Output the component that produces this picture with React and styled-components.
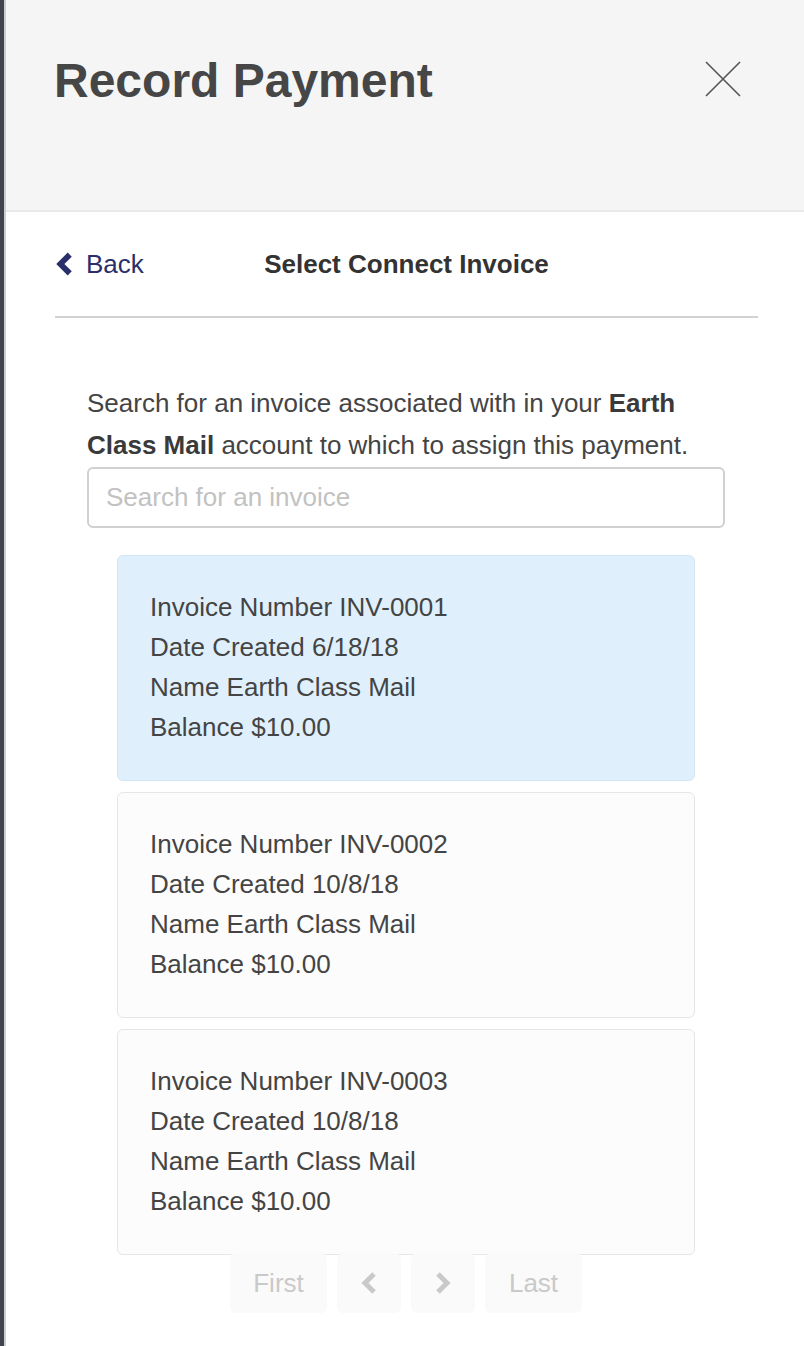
import React, { useState } from "react";
import styled, { createGlobalStyle } from "styled-components";

const GlobalStyle = createGlobalStyle`
    html, body {
        margin: 0;
        padding: 0;
        background: #ffffff;
    }
    body {
        font-family: "Liberation Sans", Arial, sans-serif;
        color: #444444;
    }
`;

const Page = styled.div`
    display: flex;
    min-height: 100vh;
`;

const Backdrop = styled.div`
    width: 4px;
    flex-shrink: 0;
    background: #41434f;
`;

const Panel = styled.div`
    flex: 1;
    display: flex;
    flex-direction: column;
    border-left: 2px solid #cdcdcd;
    background: #ffffff;
`;

const Header = styled.div`
    display: flex;
    justify-content: space-between;
    align-items: flex-start;
    height: 212px;
    box-sizing: border-box;
    padding: 57px 63px 0 48px;
    background: #f5f5f5;
    border-bottom: 2px solid #e9e9e9;
`;

const Title = styled.h1`
    margin: 0;
    font-size: 48px;
    line-height: 48px;
    font-weight: 700;
    color: #464646;
`;

const CloseButton = styled.button`
    border: none;
    background: none;
    padding: 0;
    margin-top: 4px;
    cursor: pointer;
    display: flex;
`;

const Body = styled.div`
    display: flex;
    flex-direction: column;
    padding: 0 46px 0 49px;
`;

const NavRow = styled.div`
    display: grid;
    grid-template-columns: 1fr auto 1fr;
    align-items: center;
    padding: 37px 0;
    border-bottom: 2px solid #d2d2d2;
`;

const BackLink = styled.a`
    display: flex;
    align-items: center;
    gap: 13px;
    color: #2a2f6c;
    font-size: 26px;
    line-height: 30px;
    text-decoration: none;
    cursor: pointer;
    padding-left: 1px;
`;

const StepTitle = styled.div`
    font-size: 26px;
    line-height: 30px;
    font-weight: 700;
    color: #333333;
`;

const Content = styled.div`
    display: flex;
    flex-direction: column;
    padding: 64px 33px 0 32px;
`;

const Intro = styled.p`
    margin: 0;
    font-size: 26px;
    line-height: 42px;
    color: #444444;

    strong {
        color: #3a3a3a;
    }
`;

const SearchInput = styled.input`
    margin-top: 1px;
    height: 61px;
    box-sizing: border-box;
    border: 2px solid #d0d0d0;
    border-radius: 6px;
    padding: 0 17px;
    font-family: inherit;
    font-size: 26px;
    color: #444444;
    outline: none;

    &::placeholder {
        color: #c2c2c2;
    }
`;

const InvoiceList = styled.div`
    display: flex;
    flex-direction: column;
    gap: 11px;
    margin: 27px 30px 0;
`;

const InvoiceCard = styled.div`
    padding: 31px 32px 33px;
    border: 1px solid ${(props) => (props.selected ? "#d4e6f3" : "#e6e6e6")};
    border-radius: 6px;
    background: ${(props) => (props.selected ? "#dff0fc" : "#fcfcfc")};
    cursor: pointer;
`;

const InvoiceLine = styled.div`
    font-size: 26px;
    line-height: 40px;
    color: #444444;
`;

const Pagination = styled.div`
    display: flex;
    justify-content: center;
    gap: 10px;
    margin-top: -2px;
`;

const PageButton = styled.button`
    display: flex;
    align-items: center;
    justify-content: center;
    height: 60px;
    min-width: ${(props) => (props.icon ? "64px" : "97px")};
    padding: 0 ${(props) => (props.icon ? "0" : "22px")};
    border: none;
    border-radius: 6px;
    background: #fafafa;
    color: #c9c9c9;
    font-family: inherit;
    font-size: 26px;
`;

const Chevron = ({ dir = "left", color, w = 17, h = 24, sw = 5.5 }) => (
    <svg width={w} height={h} viewBox="0 0 16 23">
        <path
            d={dir === "left" ? "M13 2.5 L4 11.5 L13 20.5" : "M3 2.5 L12 11.5 L3 20.5"}
            fill="none"
            stroke={color}
            strokeWidth={sw}
            strokeLinecap="butt"
            strokeLinejoin="miter"
        />
    </svg>
);

const invoices = [
    { id: "INV-0001", date: "6/18/18", name: "Earth Class Mail", balance: "$10.00" },
    { id: "INV-0002", date: "10/8/18", name: "Earth Class Mail", balance: "$10.00" },
    { id: "INV-0003", date: "10/8/18", name: "Earth Class Mail", balance: "$10.00" },
];

const App = () => {
    const [selected, setSelected] = useState("INV-0001");
    const [query, setQuery] = useState("");

    return (
        <Page>
            <GlobalStyle />
            <Backdrop />
            <Panel>
                <Header>
                    <Title>Record Payment</Title>
                    <CloseButton aria-label="Close">
                        <svg width="36" height="36" viewBox="0 0 36 36">
                            <path d="M1 1 L35 35 M35 1 L1 35" stroke="#555555" strokeWidth="1.6" fill="none" />
                        </svg>
                    </CloseButton>
                </Header>
                <Body>
                    <NavRow>
                        <BackLink>
                            <Chevron dir="left" color="#2a2f6c" />
                            Back
                        </BackLink>
                        <StepTitle>Select Connect Invoice</StepTitle>
                        <div />
                    </NavRow>
                    <Content>
                        <Intro>
                            Search for an invoice associated with in your <strong>Earth Class Mail</strong> account to
                            which to assign this payment.
                        </Intro>
                        <SearchInput
                            placeholder="Search for an invoice"
                            value={query}
                            onChange={(e) => setQuery(e.target.value)}
                        />
                        <InvoiceList>
                            {invoices.map((inv) => (
                                <InvoiceCard
                                    key={inv.id}
                                    selected={selected === inv.id}
                                    onClick={() => setSelected(inv.id)}
                                >
                                    <InvoiceLine>Invoice Number {inv.id}</InvoiceLine>
                                    <InvoiceLine>Date Created {inv.date}</InvoiceLine>
                                    <InvoiceLine>Name {inv.name}</InvoiceLine>
                                    <InvoiceLine>Balance {inv.balance}</InvoiceLine>
                                </InvoiceCard>
                            ))}
                        </InvoiceList>
                        <Pagination>
                            <PageButton>First</PageButton>
                            <PageButton icon>
                                <Chevron dir="left" color="#c9c9c9" w={16} h={24} sw={5} />
                            </PageButton>
                            <PageButton icon>
                                <Chevron dir="right" color="#c9c9c9" w={16} h={24} sw={5} />
                            </PageButton>
                            <PageButton>Last</PageButton>
                        </Pagination>
                    </Content>
                </Body>
            </Panel>
        </Page>
    );
};

export default App;
